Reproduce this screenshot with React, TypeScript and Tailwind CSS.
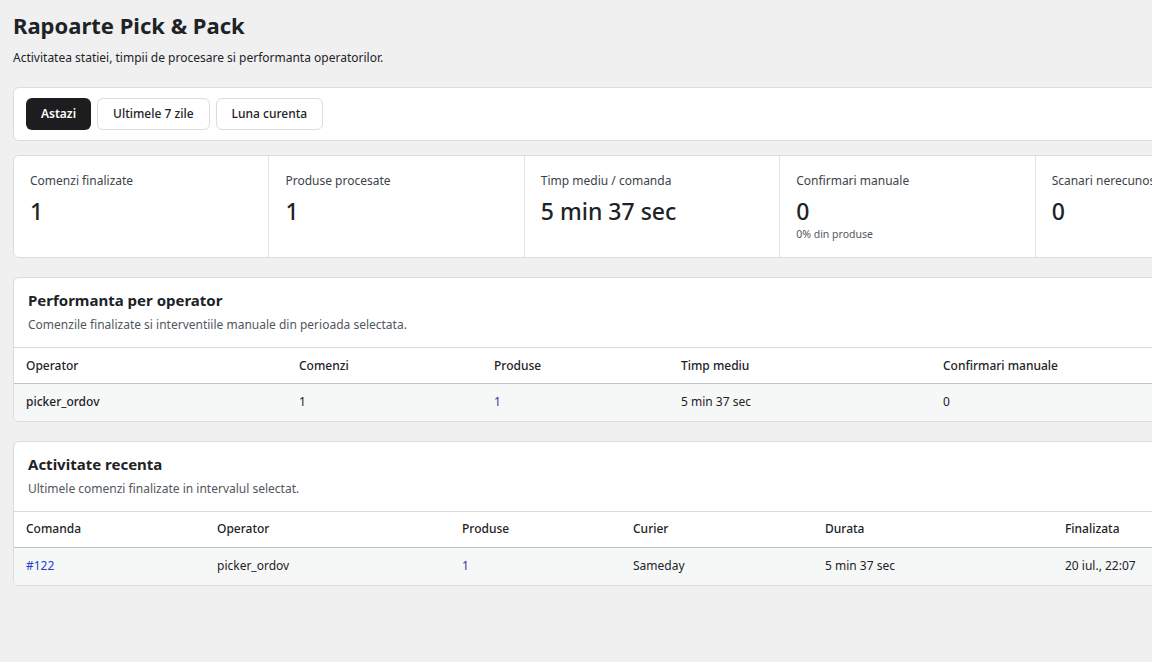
import React from "react";

const font = { fontFamily: '"Noto Sans", "Open Sans", sans-serif' };

function Stat({ label, value, sub, last }: { label: string; value: string; sub?: string; last?: boolean }) {
  return (
    <div className={`flex-1 px-4 pt-4 pb-[15px] ${last ? "" : "border-r border-[#e2e4e7]"}`}>
      <div className="text-[12px] leading-[17px] text-[#3c434a]">{label}</div>
      <div className="mt-[7px] text-[23px] leading-[30px] font-medium text-[#1d2327]">{value}</div>
      {sub && <div className="text-[10.5px] leading-[16px] text-[#50575e]">{sub}</div>}
    </div>
  );
}

function Card({ title, subtitle, children }: { title: string; subtitle: string; children: React.ReactNode }) {
  return (
    <div className="mt-[19px] rounded-[6px] border border-[#dcdcde] bg-white overflow-hidden">
      <div className="px-[14px] pt-[12px] pb-[13px]">
        <div className="text-[15px] leading-[20px] font-bold text-[#1d2327]">{title}</div>
        <div className="mt-[6px] text-[12px] leading-[18px] text-[#50575e]">{subtitle}</div>
      </div>
      {children}
    </div>
  );
}

export default function App() {
  return (
    <div className="h-[662px] w-full overflow-hidden bg-[#f0f0f1]" style={font}>
      <div className="w-[1304px] px-[13px] pt-[10px]">
        <h1 className="text-[22px] leading-[30px] font-bold text-[#1d2327]">Rapoarte Pick &amp; Pack</h1>
        <p className="mt-[8px] text-[12px] leading-[20px] text-[#1d2327]">
          Activitatea statiei, timpii de procesare si performanta operatorilor.
        </p>

        <div className="mt-[19px] flex items-center justify-between rounded-[6px] border border-[#dcdcde] bg-white px-3 py-[10px]">
          <div className="flex gap-[6px]">
            <button className="h-8 rounded-[6px] bg-[#1d1d1f] px-[15px] text-[12px] font-semibold text-white">Astazi</button>
            <button className="h-8 rounded-[6px] border border-[#dcdcde] bg-white px-[15px] text-[12px] font-medium text-[#1d2327]">Ultimele 7 zile</button>
            <button className="h-8 rounded-[6px] border border-[#dcdcde] bg-white px-[15px] text-[12px] font-medium text-[#1d2327]">Luna curenta</button>
          </div>
          <div className="text-[12px] text-[#646970]">Actualizat la 22:07</div>
        </div>

        <div className="mt-[14px] flex rounded-[6px] border border-[#dcdcde] bg-white">
          <Stat label="Comenzi finalizate" value="1" />
          <Stat label="Produse procesate" value="1" />
          <Stat label="Timp mediu / comanda" value="5 min 37 sec" />
          <Stat label="Confirmari manuale" value="0" sub="0% din produse" />
          <Stat label="Scanari nerecunoscute" value="0" last />
        </div>

        <Card title="Performanta per operator" subtitle="Comenzile finalizate si interventiile manuale din perioada selectata.">
          <table className="w-full table-fixed border-collapse text-[12px] text-[#1d2327]">
            <colgroup>
              <col className="w-[273px]" />
              <col className="w-[195px]" />
              <col className="w-[187px]" />
              <col className="w-[262px]" />
              <col />
            </colgroup>
            <thead>
              <tr className="h-[36px] border-t border-b border-t-[#dcdcde] border-b-[#c3c4c7] text-left">
                <th className="px-3 font-medium">Operator</th>
                <th className="px-3 font-medium">Comenzi</th>
                <th className="px-3 font-medium">Produse</th>
                <th className="px-3 font-medium">Timp mediu</th>
                <th className="px-3 font-medium">Confirmari manuale</th>
              </tr>
            </thead>
            <tbody>
              <tr className="h-[37px] bg-[#f6f7f7]">
                <td className="px-3 font-medium">picker_ordov</td>
                <td className="px-3">1</td>
                <td className="px-3 text-[#2c3a9a]">1</td>
                <td className="px-3">5 min 37 sec</td>
                <td className="px-3">0</td>
              </tr>
            </tbody>
          </table>
        </Card>

        <Card title="Activitate recenta" subtitle="Ultimele comenzi finalizate in intervalul selectat.">
          <table className="w-full table-fixed border-collapse text-[12px] text-[#1d2327]">
            <colgroup>
              <col className="w-[191px]" />
              <col className="w-[245px]" />
              <col className="w-[171px]" />
              <col className="w-[192px]" />
              <col className="w-[240px]" />
              <col />
            </colgroup>
            <thead>
              <tr className="h-[36px] border-t border-b border-t-[#dcdcde] border-b-[#c3c4c7] text-left">
                <th className="px-3 font-medium">Comanda</th>
                <th className="px-3 font-medium">Operator</th>
                <th className="px-3 font-medium">Produse</th>
                <th className="px-3 font-medium">Curier</th>
                <th className="px-3 font-medium">Durata</th>
                <th className="px-3 font-medium">Finalizata</th>
              </tr>
            </thead>
            <tbody>
              <tr className="h-[38px] bg-[#f6f7f7]">
                <td className="px-3 text-[#2340d0]">#122</td>
                <td className="px-3">picker_ordov</td>
                <td className="px-3 text-[#2c3a9a]">1</td>
                <td className="px-3">Sameday</td>
                <td className="px-3">5 min 37 sec</td>
                <td className="px-3">20 iul., 22:07</td>
              </tr>
            </tbody>
          </table>
        </Card>
      </div>
    </div>
  );
}
